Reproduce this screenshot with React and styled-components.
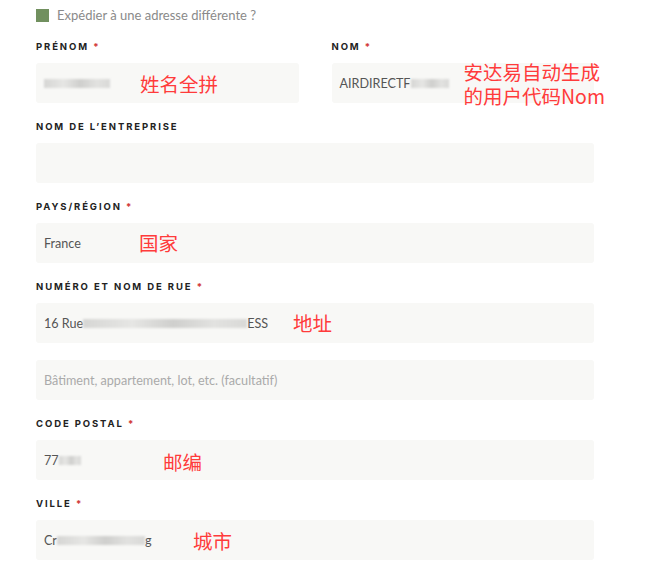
import styled, { createGlobalStyle } from "styled-components";

const GlobalStyle = createGlobalStyle`
  body {
    margin: 0;
    background: #fff;
    font-family: "Lato", "Liberation Sans", sans-serif;
  }
`;

const Form = styled.div`
  width: 558px;
  padding-left: 36px;
`;

const ShipRow = styled.label`
  display: flex;
  align-items: center;
  gap: 8px;
  height: 30px;
  margin-bottom: 10px;
  font-size: 13px;
  color: #8a8a8a;
`;

const Check = styled.span`
  width: 13px;
  height: 13px;
  background: #71905f;
`;

const Row = styled.div`
  display: grid;
  grid-template-columns: 1fr 1fr;
  column-gap: 33px;
`;

const Field = styled.div`
  margin-bottom: 17px;
`;

const Label = styled.div`
  font-family: "Inter", "DejaVu Sans", sans-serif;
  font-size: 9.5px;
  font-weight: 700;
  letter-spacing: 1.9px;
  line-height: 14px;
  color: #222;
  text-transform: uppercase;
  margin-bottom: 9px;
`;

const Req = styled.span`
  color: #d23a3a;
`;

const Box = styled.div`
  position: relative;
  height: 40px;
  box-sizing: border-box;
  padding: 0 8px;
  background: #f8f8f6;
  border-radius: 3px;
  display: flex;
  align-items: center;
  font-size: 12.6px;
  color: ${(p) => (p.$placeholder ? "#aaa" : "#555")};
  & + & {
    margin-top: 17px;
  }
`;

const Mask = styled.span`
  display: inline-block;
  width: ${(p) => p.$w}px;
  height: 9px;
  background: linear-gradient(90deg, #d6d6d4, #e6e6e4 30%, #cfcfcd 55%, #e2e2e0 80%, #d9d9d7);
  filter: blur(1px);
`;

const Note = styled.div`
  position: absolute;
  left: ${(p) => p.$x}px;
  top: ${(p) => p.$y}px;
  font-family: "Noto Sans CJK SC", sans-serif;
  font-size: 19.5px;
  line-height: 24px;
  color: #ff3b3b;
  white-space: nowrap;
`;

export default function App() {
  return (
    <>
      <GlobalStyle />
      <Form>
        <ShipRow>
          <Check />
          Expédier à une adresse différente ?
        </ShipRow>

        <Row>
          <Field>
            <Label>Prénom <Req>*</Req></Label>
            <Box>
              <Mask $w={66} />
              <Note $x={104} $y={9}>姓名全拼</Note>
            </Box>
          </Field>
          <Field>
            <Label>Nom <Req>*</Req></Label>
            <Box>
              AIRDIRECTF<Mask $w={38} />
              <Note $x={132} $y={-3}>安达易自动生成<br />的用户代码Nom</Note>
            </Box>
          </Field>
        </Row>

        <Field>
          <Label>Nom de l’entreprise</Label>
          <Box />
        </Field>

        <Field>
          <Label>Pays/région <Req>*</Req></Label>
          <Box>
            France
            <Note $x={103} $y={8}>国家</Note>
          </Box>
        </Field>

        <Field>
          <Label>Numéro et nom de rue <Req>*</Req></Label>
          <Box>
            16 Rue<Mask $w={164} />ESS
            <Note $x={257} $y={8}>地址</Note>
          </Box>
          <Box $placeholder>Bâtiment, appartement, lot, etc. (facultatif)</Box>
        </Field>

        <Field>
          <Label>Code postal <Req>*</Req></Label>
          <Box>
            77<Mask $w={22} />
            <Note $x={127} $y={10}>邮编</Note>
          </Box>
        </Field>

        <Field>
          <Label>Ville <Req>*</Req></Label>
          <Box>
            Cr<Mask $w={88} />g
            <Note $x={157} $y={9}>城市</Note>
          </Box>
        </Field>
      </Form>
    </>
  );
}
